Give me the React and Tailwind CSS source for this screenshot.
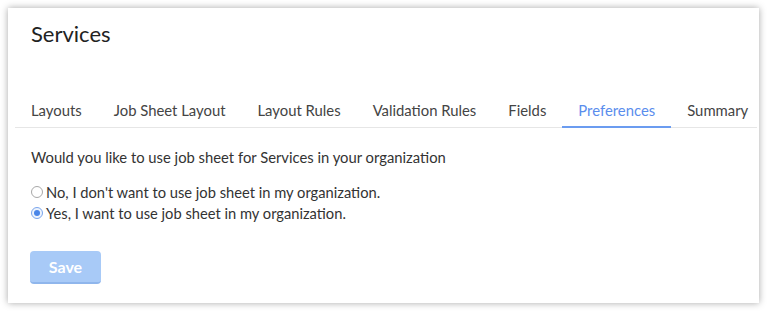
export default function App() {
  const tabs = ["Layouts", "Job Sheet Layout", "Layout Rules", "Validation Rules", "Fields", "Preferences", "Summary"];
  return (
    <div className="w-[768px] h-[312px] bg-white pl-2 pt-2" style={{ fontFamily: "Lato, 'Open Sans', sans-serif" }}>
      <div className="w-[751px] h-[295px] bg-white shadow-[0_0_7px_rgba(0,0,0,0.35)] flex flex-col">
        <div className="pl-[23px] pt-[13px] text-[22px] leading-[26px] text-[#222]">Services</div>
        <div className="ml-[7px] mr-[2px] mt-[54px] flex border-b border-[#e6e6e6]">
          {tabs.map((t) => (
            <div
              key={t}
              className={
                "px-4 pb-[7px] text-[14.85px] leading-[18px] whitespace-nowrap " +
                (t === "Preferences" ? "text-[#5a8ded] border-b-2 border-[#6b9cf0] -mb-px pb-[6px]" : "text-[#444]")
              }
            >
              {t}
            </div>
          ))}
        </div>
        <div className="pl-[23px] pt-[20px] text-[14.8px] leading-[18px] text-[#333]">
          Would you like to use job sheet for Services in your organization
        </div>
        <div className="pl-[23px] pt-[17px] flex flex-col gap-[3px] text-[14.7px] leading-[18px] text-[#333]">
          <label className="flex items-center gap-[3px]">
            <span className="w-[12px] h-[12px] rounded-full border border-[#a8a8a8] bg-white inline-block" />
            No, I don't want to use job sheet in my organization.
          </label>
          <label className="flex items-center gap-[3px]">
            <span className="w-[12px] h-[12px] rounded-full border border-[#7aa5ec] bg-[#eef4fd] flex items-center justify-center">
              <span className="w-[6px] h-[6px] rounded-full bg-[#4a86e8]" />
            </span>
            Yes, I want to use job sheet in my organization.
          </label>
        </div>
        <div className="pl-[22px] pt-[29px]">
          <button className="w-[71px] h-[33px] rounded-[4px] bg-[#a8caf7] border-b-2 border-[#8fb6ec] text-white text-[16px] font-bold">
            Save
          </button>
        </div>
      </div>
    </div>
  );
}
